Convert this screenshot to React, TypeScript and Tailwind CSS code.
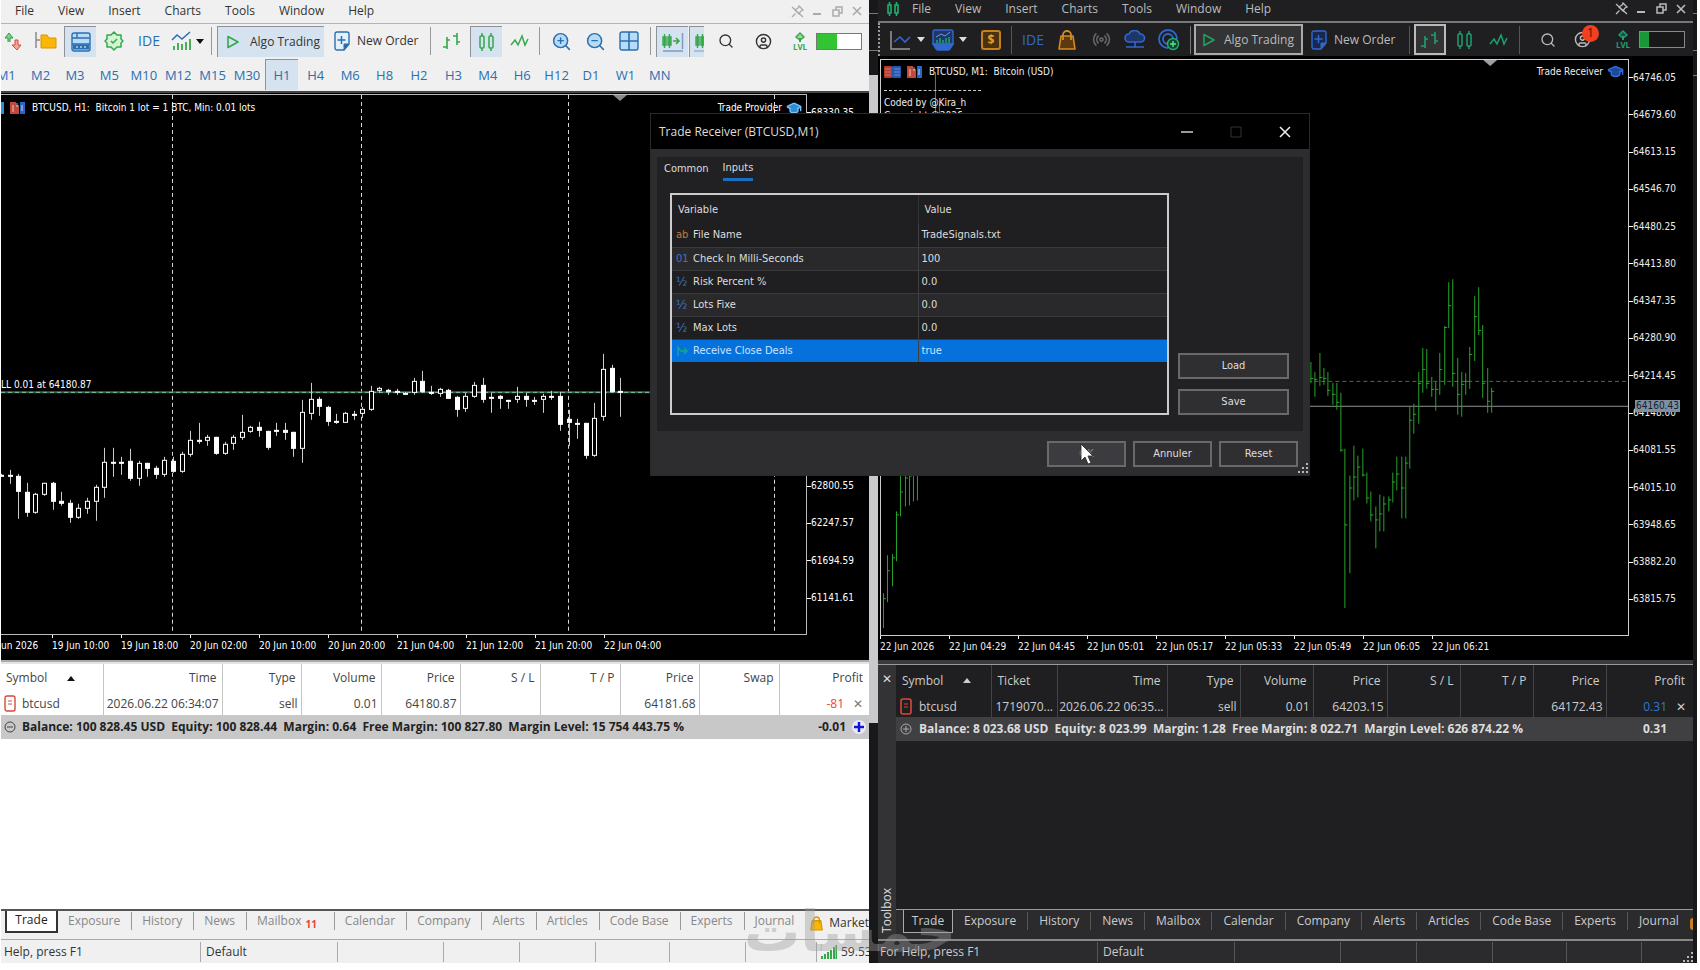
import type { ReactNode } from 'react';
import { CircleUser, GraduationCap, Radio, Search, ZoomIn, ZoomOut } from 'lucide-react';

// high, low, body top, body bottom, hollow (1) or filled (0), in thirds of a pixel
const CANDLES: number[][] = [
  [403, 411, 405, 410, 0], [390, 432, 404, 412, 0], [402, 536, 409, 457, 0], [428, 530, 456, 520, 0],
  [460, 522, 462, 520, 1], [430, 468, 430, 465, 1], [425, 510, 430, 486, 0], [456, 498, 484, 492, 0],
  [480, 548, 489, 535, 0], [492, 537, 505, 535, 1], [473, 522, 483, 507, 1], [434, 542, 440, 486, 1],
  [325, 475, 367, 443, 1], [325, 410, 365, 371, 0], [350, 404, 365, 371, 0], [328, 422, 364, 416, 0],
  [362, 437, 370, 416, 1], [368, 411, 369, 387, 0], [378, 418, 385, 405, 0], [350, 412, 360, 406, 1],
  [350, 400, 364, 395, 0], [335, 398, 343, 396, 1], [273, 352, 299, 346, 1], [248, 313, 299, 304, 0],
  [285, 318, 291, 304, 1], [290, 344, 291, 343, 0], [305, 345, 313, 343, 1], [284, 330, 291, 313, 1],
  [224, 300, 275, 294, 1], [257, 280, 260, 276, 1], [247, 290, 260, 274, 0], [273, 330, 274, 325, 0],
  [250, 288, 271, 276, 0], [248, 300, 271, 280, 0], [276, 352, 277, 328, 0], [180, 370, 216, 326, 1],
  [130, 240, 178, 222, 1], [170, 227, 176, 202, 0], [199, 257, 200, 245, 0], [222, 252, 242, 247, 0],
  [215, 250, 220, 248, 1], [214, 240, 223, 228, 0], [200, 235, 207, 221, 1], [138, 212, 152, 209, 1],
  [142, 160, 144, 154, 1], [147, 166, 150, 155, 0], [146, 166, 153, 160, 0], [155, 166, 159, 162, 0],
  [113, 164, 123, 160, 1], [94, 160, 123, 156, 0], [138, 164, 155, 160, 0], [145, 172, 148, 162, 1],
  [147, 178, 149, 176, 0], [168, 230, 172, 210, 0], [160, 215, 167, 208, 1], [127, 173, 136, 170, 1],
  [113, 188, 136, 180, 0], [158, 220, 170, 178, 1], [165, 207, 169, 178, 0], [180, 208, 180, 183, 0],
  [140, 188, 167, 180, 1], [160, 200, 168, 180, 0], [170, 195, 181, 184, 0], [162, 220, 169, 180, 1],
  [152, 180, 168, 172, 0], [155, 272, 168, 256, 0], [209, 318, 238, 250, 0], [238, 297, 249, 253, 0],
  [249, 356, 250, 349, 0], [190, 352, 234, 348, 1], [42, 242, 86, 230, 1], [75, 160, 84, 156, 0],
  [115, 230, 154, 158, 0],
];

// high/low pairs in thirds of a pixel
const BARS_START: number[][] = [
  [1033, 1138], [917, 1060], [915, 1010], [785, 935], [678, 802], [600, 772], [600, 768], [600, 755], [600, 752],
];
const BARS_END: number[][] = [
  [337, 400], [365, 440], [310, 408], [355, 405], [365, 437], [400, 465], [398, 480], [430, 605], [596, 1078],
  [678, 972], [587, 752], [618, 745], [598, 682], [670, 762], [725, 815], [772, 898], [735, 847], [740, 845],
  [740, 785], [670, 760], [622, 723], [622, 807], [620, 807], [468, 657], [463, 553], [367, 523], [295, 430],
  [298, 418], [382, 440], [395, 483], [308, 436], [228, 405], [97, 235], [87, 412], [325, 495], [367, 502],
  [370, 436], [290, 418], [138, 332], [111, 255], [226, 443], [355, 488], [415, 488],
];

const MENU = ['File', 'View', 'Insert', 'Charts', 'Tools', 'Window', 'Help'];
const TIMEFRAMES = [
  'M1', 'M2', 'M3', 'M5', 'M10', 'M12', 'M15', 'M30', 'H1', 'H4',
  'M6', 'H8', 'H2', 'H3', 'M4', 'H6', 'H12', 'D1', 'W1', 'MN',
];
const TABS = [
  'Exposure', 'History', 'News', 'Mailbox', 'Calendar', 'Company', 'Alerts', 'Articles', 'Code Base', 'Experts', 'Journal',
];
const LEFT_TIMES = [
  '19 Jun 10:00', '19 Jun 18:00', '20 Jun 02:00', '20 Jun 10:00', '20 Jun 20:00',
  '21 Jun 04:00', '21 Jun 12:00', '21 Jun 20:00', '22 Jun 04:00',
];
const RIGHT_TIMES = [
  '22 Jun 2026', '22 Jun 04:29', '22 Jun 04:45', '22 Jun 05:01', '22 Jun 05:17',
  '22 Jun 05:33', '22 Jun 05:49', '22 Jun 06:05', '22 Jun 06:21',
];
const LEFT_PRICES = Array.from({ length: 14 }, (_, i) => (68330.35 - i * 552.98).toFixed(2));
const RIGHT_PRICES = Array.from({ length: 15 }, (_, i) => (64746.05 - i * 66.45).toFixed(2));

const INPUTS = [
  { kind: 'ab', name: 'File Name', value: 'TradeSignals.txt' },
  { kind: '01', name: 'Check In Milli-Seconds', value: '100' },
  { kind: '½', name: 'Risk Percent %', value: '0.0' },
  { kind: '½', name: 'Lots Fixe', value: '0.0' },
  { kind: '½', name: 'Max Lots', value: '0.0' },
  { kind: 'flag', name: 'Receive Close Deals', value: 'true' },
];

/* ---------- icons ---------- */

function Svg({ w = 20, h = 20, className = '', children }: { w?: number; h?: number; className?: string; children: ReactNode }) {
  return (
    <svg width={w} height={h} viewBox={`0 0 ${w} ${h}`} fill="none" className={`shrink-0 ${className}`} aria-hidden="true">
      {children}
    </svg>
  );
}

const BarsIcon = ({ c }: { c: string }) => (
  <Svg><path d="M5 6v12M1 16h4M5 9h3M15 2v12M11 5h4M15 11h3" stroke={c} strokeWidth="1.6" /></Svg>
);

const CandlesIcon = ({ c }: { c: string }) => (
  <Svg>
    <rect x="3" y="4" width="4" height="12" rx="1" stroke={c} strokeWidth="1.5" />
    <rect x="12" y="4" width="4" height="12" rx="1" stroke={c} strokeWidth="1.5" />
    <path d="M5 1v3M5 16v3M14 1v3M14 16v3" stroke={c} strokeWidth="1.5" />
  </Svg>
);

const WaveIcon = ({ c }: { c: string }) => (
  <Svg><path d="M1 14l4-5 3 5 4-9 3 9 3-6" stroke={c} strokeWidth="1.5" /></Svg>
);

const PlayIcon = ({ c }: { c: string }) => (
  <Svg w={14} h={16}><path d="M2 2.500l10 5.500-10 5.500z" stroke={c} strokeWidth="1.6" strokeLinejoin="round" /></Svg>
);

const NewOrderIcon = ({ c, fill }: { c: string; fill: string }) => (
  <Svg w={16}>
    <path d="M3 1h10a2 2 0 012 2v10l-5 6H3a2 2 0 01-2-2V3a2 2 0 012-2z" fill={fill} stroke={c} strokeWidth="1.4" />
    <path d="M15 13h-5v6z" fill={c} stroke={c} />
    <path d="M7.500 5v8M3.500 9h8" stroke={c} strokeWidth="1.5" />
  </Svg>
);

const BagIcon = ({ w, h, c, fill }: { w: number; h: number; c: string; fill: string }) => (
  <svg width={w} height={h} viewBox="0 0 18 20" fill="none" className="shrink-0" aria-hidden="true">
    <path d="M3 6h12l2 13H1z" fill={fill} stroke={c} strokeWidth="1.6" strokeLinejoin="round" />
    <path d="M5 10V5a4 4 0 018 0v5" stroke={c} strokeWidth="1.8" />
  </svg>
);

const LevelIcon = ({ c }: { c: string }) => (
  <span className="flex w-4 shrink-0 flex-col items-center">
    <Svg w={12} h={10}><path d="M6 1l4 4-2.500 2h-3L2 5z" fill={c} fillOpacity=".4" stroke={c} strokeWidth="1.4" /><path d="M6 6v4" stroke={c} strokeWidth="2" /></Svg>
    <span className="text-[8px] leading-[9px] font-bold" style={{ color: c }}>LVL</span>
  </span>
);

const Caret = ({ c }: { c: string }) => (
  <Svg w={8} h={5}><path d="M0 0h8L4 5z" fill={c} /></Svg>
);

const ChartPair = () => (
  <Svg w={16} h={14}>
    <path d="M0 1h6v3h3v9H0z" fill="#c0483c" />
    <path d="M10 1h5v12h-5z" fill="#2a66c8" />
    <path d="M3 4v7M7 2v4M12 4v6" stroke="#fff" strokeOpacity=".7" />
  </Svg>
);

const Depth = () => (
  <Svg w={17} h={14}>
    <rect y="1" width="8" height="12" rx="1" fill="#b5382f" />
    <rect x="8" y="1" width="9" height="12" rx="1" fill="#2458b0" />
    <path d="M1 4h6M1 7h6M1 10h6M10 4h6M10 7h6M10 10h6" stroke="#fff" strokeOpacity=".35" />
  </Svg>
);

const Grip = () => (
  <Svg w={10} h={10} className="text-[#b8b8b8]">
    <path d="M8 0h2v2H8zM8 4h2v2H8zM4 4h2v2H4zM8 8h2v2H8zM4 8h2v2H4zM0 8h2v2H0z" fill="currentColor" />
  </Svg>
);

const WindowControls = ({ color }: { color: string }) => (
  <div className={`flex items-center gap-1 ${color}`}>
    <button aria-label="Unpin" className="flex w-4 justify-center">
      <Svg w={13} h={13}>
        <path d="M8 1l4 4-2 1-2 3-4-4 3-2zM4.500 8.500L1 12M1 2l11 10" stroke="currentColor" strokeWidth="1.3" />
      </Svg>
    </button>
    <button aria-label="Minimize" className="flex w-4 justify-center"><Svg w={10} h={10}><path d="M1 8h8" stroke="currentColor" strokeWidth="2" /></Svg></button>
    <button aria-label="Restore" className="flex w-4 justify-center">
      <Svg w={11} h={11}><path d="M1 4h6v6H1zM4 4V1h6v6H7" stroke="currentColor" strokeWidth="1.5" /></Svg>
    </button>
    <button aria-label="Close" className="flex w-4 justify-center">
      <Svg w={10} h={10}><path d="M1 1l8 8M9 1L1 9" stroke="currentColor" strokeWidth="1.6" /></Svg>
    </button>
  </div>
);

const Slot = ({ label, children }: { label: string; children: ReactNode }) => (
  <button aria-label={label} className="flex h-[31px] w-[34px] shrink-0 items-center justify-center">{children}</button>
);

const LightToggle = ({ label, children }: { label: string; children: ReactNode }) => (
  <button aria-label={label} className="mx-px flex h-[31px] w-8 shrink-0 items-center justify-center border-t border-l border-[#8f9296] bg-[#d5e2f0]">
    {children}
  </button>
);

/* ---------- charts ---------- */

function PriceAxis({ prices }: { prices: string[] }) {
  return (
    <ul className="flex w-[62px] shrink-0 flex-col pb-[18px]">
      {prices.map((p) => (
        <li key={p} className="flex min-h-0 flex-1 items-center">
          <span className="h-px w-1 bg-white" />
          {p}
        </li>
      ))}
    </ul>
  );
}

function TimeAxis({ times }: { times: string[] }) {
  return (
    <>
      {times.map((t) => (
        <li key={t} className="w-[69px] shrink-0">
          <span className="block h-[3px] w-px bg-white" />
          <span className="block leading-4 whitespace-nowrap">{t}</span>
        </li>
      ))}
    </>
  );
}

function CandleChart() {
  return (
    <svg viewBox="0 0 805 539" preserveAspectRatio="none" className="absolute inset-0 h-full w-full" aria-hidden="true">
      {[171, 360, 567, 773].map((x) => (
        <path key={x} d={`M${x}.500 0V539`} stroke="#d8d8d8" strokeDasharray="4 3" />
      ))}
      <path d="M0 297.500H805" stroke="#2c6b4c" strokeWidth="2" />
      <path d="M0 297.500H805" stroke="#8fb8a0" strokeDasharray="4 3" />
      {CANDLES.map(([high, low, top, bottom, hollow], i) => {
        const x = Math.round(i * 8.6);
        const y = (v: number) => Math.round(245 + v / 3);
        return (
          <g key={i} stroke="#fff">
            <path d={`M${x}.500 ${y(high)}V${y(low)}`} stroke="#ccc" />
            <rect
              x={x - 1.5}
              y={y(top) + 0.5}
              width="4"
              height={Math.max(1, y(bottom) - y(top) - 1)}
              fill={hollow ? '#000' : '#fff'}
            />
          </g>
        );
      })}
      <path d="M612 0h14l-7 6z" fill="#8a8a8a" />
    </svg>
  );
}

function BarSeries({ bars, start }: { bars: number[][]; start: number }) {
  const y = (v: number) => Math.round(191 + v / 3);
  return (
    <>
      {bars.map(([high, low], i) => {
        const x = Math.round(start + i * 4.31);
        const next = bars[i + 1];
        const link = next ? y((Math.max(high, next[0]) + Math.min(low, next[1])) / 2) : y(high + 8);
        return <path key={i} d={`M${x}.500 ${y(high)}V${y(low)}M${x} ${link}.500h3`} />;
      })}
    </>
  );
}

function BarChart() {
  return (
    <svg viewBox="0 0 748 577" preserveAspectRatio="none" className="absolute inset-0 h-full w-full" aria-hidden="true">
      <path d="M0 322.500H748" stroke="#1f8a2c" strokeDasharray="4 3" />
      <path d="M0 347.500H748" stroke="#8c8f93" />
      <g stroke="#27a52b">
        <path d="M54.500 12V70M58.500 44V70" />
        <BarSeries bars={BARS_START} start={2} />
        <BarSeries bars={BARS_END} start={430} />
      </g>
      <path d="M603 0h14l-7 6z" fill="#9aa0a6" />
    </svg>
  );
}

/* ---------- left terminal ---------- */

function LeftToolbar() {
  return (
    <div className="flex h-[35px] shrink-0 items-center overflow-hidden border-t border-[#b4b4b4] text-[#333]">
      <div className="-ml-[6px] flex shrink-0 items-center">
        <Slot label="Symbols">
          <Svg>
            <path d="M6 11V7H3l4-5 4 5H8v4" fill="#7fd08a" stroke="#2f9e44" />
            <path d="M13 9v5h-3l5 5 4-5h-3V9z" fill="#f3a59c" stroke="#d9483b" />
          </Svg>
        </Slot>
        <Slot label="Navigator">
          <Svg w={22}><path d="M1 1v16M1 9h4" stroke="#8a8a8a" strokeWidth="1.5" /><path d="M6 4h6l2 3h7v10H6z" fill="#fbb606" stroke="#d99400" /></Svg>
        </Slot>
        <LightToggle label="Toolbox">
          <Svg>
            <rect x="1" y="1" width="18" height="18" rx="2" fill="#b8dcf8" stroke="#2a6fb0" strokeWidth="1.4" />
            <path d="M1 6h18M6 1v5M1 12h18" stroke="#2a6fb0" strokeWidth="1.4" />
            <path d="M2 12.500h16v5H2z" fill="#2a6fb0" /><path d="M5 15h10" stroke="#fff" strokeDasharray="2 2" />
          </Svg>
        </LightToggle>
        <Slot label="Options">
          <Svg>
            <path d="M10 1l3 3h4v4l2 2-2 2v4h-4l-3 3-3-3H3v-4l-2-2 2-2V4h4z" fill="#d3f5d6" stroke="#35a84a" strokeWidth="1.5" strokeLinejoin="round" />
            <path d="M7 10l2 2 4-4" stroke="#35a84a" strokeWidth="1.5" />
          </Svg>
        </Slot>
        <button className="w-[36px] text-[14px] text-[#2a6fb0]">IDE</button>
        <button aria-label="Indicators" className="flex w-10 items-center gap-1 pl-1">
          <Svg w={21}>
            <path d="M1 9l5-5 5 4 8-7" stroke="#2a6fb0" strokeWidth="1.5" />
            <path d="M3 19v-4M7 19v-7M11 19v-6M15 19v-8M19 19V8" stroke="#35a84a" strokeWidth="1.8" />
          </Svg>
          <Caret c="#111" />
        </button>
      </div>
      <div className="ml-1 h-7 w-px shrink-0 bg-[#999]" />
      <button className="ml-[5px] flex h-[31px] w-[107px] shrink-0 items-center gap-[10px] border-t border-l border-[#8f9296] bg-[#d5e2f0] pl-2 whitespace-nowrap">
        <PlayIcon c="#35a84a" />Algo Trading
      </button>
      <button className="ml-[10px] flex shrink-0 items-center gap-[7px] whitespace-nowrap">
        <NewOrderIcon c="#2a6fb0" fill="#e4f1fc" />New Order
      </button>
      <div className="ml-auto flex shrink-0 items-center pr-[7px]">
        <div className="h-7 w-px bg-[#999]" />
        <div className="ml-1 flex items-center">
          <Slot label="Bar chart"><BarsIcon c="#35a84a" /></Slot>
          <LightToggle label="Candlesticks"><CandlesIcon c="#35a84a" /></LightToggle>
          <Slot label="Line chart"><WaveIcon c="#35a84a" /></Slot>
        </div>
        <div className="mr-1 ml-[2px] h-7 w-px bg-[#999]" />
        <Slot label="Zoom in"><ZoomIn size={21} strokeWidth={1.7} className="fill-[#b8dcf8] text-[#2a6fb0]" /></Slot>
        <Slot label="Zoom out"><ZoomOut size={21} strokeWidth={1.7} className="fill-[#b8dcf8] text-[#2a6fb0]" /></Slot>
        <Slot label="Tile windows">
          <Svg><rect x="1" y="1" width="18" height="18" rx="2" fill="#b8dcf8" stroke="#2a6fb0" strokeWidth="1.4" /><path d="M10 1v18M1 10h18" stroke="#2a6fb0" strokeWidth="1.6" /></Svg>
        </Slot>
        <div className="mx-1 h-7 w-px bg-[#999]" />
        <LightToggle label="Chart shift">
          <Svg w={24}>
            <path d="M2 5h3v8H2zM7 5h3v8H7zM3.500 2v14M8.500 2v14" stroke="#35a84a" strokeWidth="1.4" />
            <path d="M12 9h6M15 6l3 3-3 3" stroke="#35a84a" strokeWidth="1.6" /><path d="M21.500 1v16M2 19h20" stroke="#7c9cc0" strokeWidth="1.5" />
          </Svg>
        </LightToggle>
        <button aria-label="Auto scroll" className="flex h-[31px] w-[15px] items-center overflow-hidden border-t border-l border-[#8f9296] bg-[#d5e2f0] pl-1">
          <Svg w={12}><path d="M2 5h3v8H2zM7 5h3v8H7zM3.500 2v14M8.500 2v14" stroke="#35a84a" strokeWidth="1.4" /><path d="M0 19h12" stroke="#7c9cc0" /></Svg>
        </button>
        <button aria-label="Search" className="ml-[14px] w-[37px]"><Search size={16} strokeWidth={2} /></button>
        <button aria-label="Account" className="w-[37px]"><CircleUser size={17} strokeWidth={2} /></button>
        <LevelIcon c="#35a84a" />
        <div className="ml-2 h-[17px] w-[46px] border border-[#777] bg-white"><div className="h-full w-5 bg-[#33c433]" /></div>
      </div>
    </div>
  );
}

function LeftTerminal() {
  return (
    <section className="flex min-w-0 flex-[868] flex-col overflow-hidden bg-[#f0f0f0]">
      <nav className="flex h-[23px] shrink-0 items-center justify-between pr-1 pb-px pl-[14px] text-[#333]">
        <div className="flex gap-6">
          {MENU.map((m) => <button key={m}>{m}</button>)}
        </div>
        <WindowControls color="text-[#aaa]" />
      </nav>
      <LeftToolbar />
      <div className="-ml-3 grid h-[33px] w-[688px] shrink-0 grid-cols-20 items-start pt-px text-[13px] text-[#2a6fb0]">
        {TIMEFRAMES.map((tf) => (
          <button
            key={tf}
            className={tf === 'H1' ? 'mx-px h-[31px] border-t border-l border-[#8f9296] bg-[#d5e2f0]' : 'h-[31px]'}
          >
            {tf}
          </button>
        ))}
      </div>

      <div className="flex min-h-0 flex-[569] flex-col border-t-2 border-[#444] bg-black pt-px font-['DejaVu_Sans_Condensed','DejaVu_Sans',sans-serif] text-[10px] text-white">
        <div className="flex min-h-0 flex-1">
          <div className="relative min-w-0 flex-1 border-t border-r border-b border-[#bbb]">
            <CandleChart />
            <div className="relative flex items-center justify-between pt-[5px] pr-1">
              <div className="flex items-center gap-[6px]">
                <span className="h-3 w-[3px] bg-[#2a8fd8]" />
                <ChartPair />
                <span className="whitespace-pre">BTCUSD, H1:  Bitcoin 1 lot = 1 BTC, Min: 0.01 lots</span>
              </div>
              <div className="flex items-center gap-1">Trade Provider<GraduationCap size={16} className="fill-[#2a8fd8] text-[#7cc4f4]" /></div>
            </div>
            <span className="absolute bottom-[45%] left-0 leading-3">LL 0.01 at 64180.87</span>
          </div>
          <PriceAxis prices={LEFT_PRICES} />
        </div>
        <ul className="flex h-[25px] shrink-0 overflow-hidden">
          <li className="w-[51px] shrink-0 pt-[3px] leading-4">un 2026</li>
          <TimeAxis times={LEFT_TIMES} />
        </ul>
      </div>

      <div className="flex min-h-0 flex-[303] flex-col border-t-2 border-[#aaa]">
        <div className="flex min-h-0 flex-1 flex-col border-t-2 border-[#e4e4e4] bg-white text-[#444]">
          <table className="w-full table-fixed">
            <colgroup>
              <col className="w-[102px]" /><col className="w-[119px]" /><col className="w-[79px]" /><col className="w-[80px]" />
              <col className="w-[79px]" /><col className="w-[80px]" /><col className="w-[80px]" /><col className="w-[79px]" />
              <col className="w-[80px]" /><col />
            </colgroup>
            <thead>
              <tr className="h-[29px]">
                <th className="border-r border-[#c4c4c4] pl-[5px] text-left font-normal">
                  <span className="flex items-center gap-5">Symbol<Svg w={8} h={5}><path d="M0 5h8L4 0z" fill="#111" /></Svg></span>
                </th>
                {['Time', 'Type', 'Volume', 'Price', 'S / L', 'T / P', 'Price', 'Swap'].map((h, i) => (
                  <th key={i} className="border-r border-[#c4c4c4] pr-[5px] text-right font-normal">{h}</th>
                ))}
                <th className="pr-[6px] text-right font-normal">Profit</th>
              </tr>
            </thead>
            <tbody>
              <tr className="h-[22px]">
                <td className="border-r border-[#c4c4c4] pl-[3px]">
                  <span className="flex items-center gap-[6px]">
                    <Svg w={12} h={17}><rect x="1" y="1" width="10" height="15" rx="2" stroke="#d9483b" strokeWidth="1.4" /><path d="M4 6h4M4 9h4" stroke="#d9483b" /></Svg>
                    btcusd
                  </span>
                </td>
                {['2026.06.22 06:34:07', 'sell', '0.01', '64180.87', '', '', '64181.68', ''].map((v, i) => (
                  <td key={i} className="border-r border-[#c4c4c4] pr-[3px] text-right whitespace-nowrap">{v}</td>
                ))}
                <td className="pr-[5px]">
                  <span className="flex items-center justify-end gap-2 text-[#e8453c]">
                    -81<button aria-label="Close position" className="w-3 text-[#777]">✕</button>
                  </span>
                </td>
              </tr>
              <tr className="h-6 bg-[#c8c8c8] font-bold text-[#222]">
                <td colSpan={9} className="pl-[3px] whitespace-pre">
                  <span className="flex items-center gap-[6px]">
                    <Svg w={12} h={12}><circle cx="6" cy="6" r="5" stroke="#444" /><path d="M3 6h6" stroke="#444" /></Svg>
                    Balance: 100 828.45 USD  Equity: 100 828.44  Margin: 0.64  Free Margin: 100 827.80  Margin Level: 15 754 443.75 %
                  </span>
                </td>
                <td className="pr-[3px]">
                  <span className="flex items-center justify-end gap-[6px]">
                    -0.01
                    <Svg w={14} h={14}><circle cx="7" cy="7" r="7" fill="#e8e8f8" /><path d="M7 2v10M2 7h10" stroke="#1414d8" strokeWidth="2.4" /></Svg>
                  </span>
                </td>
              </tr>
            </tbody>
          </table>
        </div>
        <div className="flex h-[30px] shrink-0 items-start overflow-hidden border-t-2 border-[#555] whitespace-nowrap text-[#888]">
          <button className="-mt-[2px] ml-1 h-6 w-[53px] shrink-0 border-2 border-t-0 border-[#333] bg-white text-[#222]">Trade</button>
          {TABS.map((t) => (
            <button
              key={t}
              className={`mt-px h-[18px] shrink-0 pr-[11px] pl-[10px] leading-4 ${t === 'Journal' ? '' : 'border-r border-[#999]'}`}
            >
              {t}
              {t === 'Mailbox' && <sub className="mr-[6px] pl-1 text-[10px] font-bold text-[#e8453c]">11</sub>}
            </button>
          ))}
          <button className="mt-[2px] flex shrink-0 items-center gap-[6px] pl-[5px] leading-5 text-[#333]">
            <BagIcon w={13} h={15} c="#d99400" fill="#fbb606" />Market
          </button>
        </div>
        <footer className="flex h-6 shrink-0 items-center overflow-hidden border-t border-[#aaa] whitespace-nowrap text-[#333]">
          <span className="w-[199px] shrink-0 pl-[3px]">Help, press F1</span>
          <span className="h-5 w-[137px] shrink-0 border-l border-[#aaa] pl-[5px] leading-5">Default</span>
          <span className="h-5 w-[106px] shrink-0 border-l border-[#aaa]" />
          <span className="h-5 w-[76px] shrink-0 border-l border-[#aaa]" />
          <span className="h-5 w-[76px] shrink-0 border-l border-[#aaa]" />
          <span className="h-5 w-[74px] shrink-0 border-l border-[#aaa]" />
          <span className="h-5 w-[76px] shrink-0 border-l border-[#aaa]" />
          <span className="h-5 w-[71px] shrink-0 border-l border-[#aaa]" />
          <span className="flex h-5 items-center gap-1 border-l border-[#aaa] pl-1">
            <Svg w={16} h={14}><path d="M1 14v-3M4 14V9M7 14V7M10 14V5M13 14V2M15.500 14V0" stroke="#35a84a" strokeWidth="2" /></Svg>
            59.53
          </span>
        </footer>
      </div>
    </section>
  );
}

/* ---------- right terminal ---------- */

function RightToolbar() {
  return (
    <div className="flex h-[35px] shrink-0 items-center overflow-hidden border-t-2 border-[#777] whitespace-nowrap text-[#bbb]">
      <div className="h-full w-[3px] shrink-0 border-l-2 border-dotted border-[#999]" />
      <button aria-label="Chart type" className="ml-[9px] flex w-[42px] items-center gap-[6px]">
        <Svg w={21}><path d="M1 1v18h19" stroke="#999" strokeWidth="1.5" /><path d="M4 12l6-5 5 5 5-5" stroke="#3068d0" strokeWidth="1.6" /></Svg>
        <Caret c="#ddd" />
      </button>
      <button aria-label="Indicators" className="flex w-[42px] items-center gap-[5px]">
        <Svg w={22} h={22}>
          <path d="M1 3a2 2 0 012-2h16a2 2 0 012 2v12H1z" fill="#1c3768" stroke="#3068d0" strokeWidth="1.4" />
          <path d="M1 15h20l-3 5a2 2 0 01-2 1H6a2 2 0 01-2-1z" fill="#3068d0" stroke="#3068d0" strokeWidth="1.4" />
          <path d="M4 8l5-3 4 2 5-4" stroke="#6a9cf0" /><path d="M5 14v-3M8 14v-5M11 14v-3M14 14V9M17 14V8" stroke="#25a070" strokeWidth="1.5" />
        </Svg>
        <Caret c="#ddd" />
      </button>
      <Slot label="Depth of market">
        <span className="h-5 w-5 rounded-[3px] border-2 border-[#c87f1e] bg-[#4a3210] leading-4 font-bold text-[#f09a28]">$</span>
      </Slot>
      <div className="mr-1 ml-[3px] h-7 w-px shrink-0 bg-[#555]" />
      <button className="w-[34px] text-[14px] text-[#3068d0]">IDE</button>
      <Slot label="Market"><BagIcon w={18} h={20} c="#d98a1e" fill="#5c3a10" /></Slot>
      <Slot label="Signals"><Radio size={19} className="text-[#666]" /></Slot>
      <Slot label="VPS">
        <Svg w={22}><path d="M5 12a4 4 0 010-8 6 6 0 0111 0 4 4 0 011 8z" fill="#1c3768" stroke="#3068d0" strokeWidth="1.6" /><path d="M11 12v5M2 17h18" stroke="#3068d0" strokeWidth="1.6" /></Svg>
      </Slot>
      <Slot label="Copy trading">
        <Svg w={22} h={22}>
          <path d="M10 19a9 9 0 119-9M10 15a5 5 0 115-5" stroke="#3068d0" strokeWidth="1.8" />
          <circle cx="15" cy="15" r="5.500" fill="#0c4a2c" stroke="#25b070" strokeWidth="1.4" /><path d="M15 12v6M12 15h6" stroke="#5fe0a0" strokeWidth="1.4" />
        </Svg>
      </Slot>
      <div className="ml-1 h-7 w-px shrink-0 bg-[#777]" />
      <button className="ml-[3px] flex h-[31px] w-[109px] shrink-0 items-center gap-2 border-2 border-[#aaa] bg-[#333] pl-[6px]">
        <PlayIcon c="#1fa060" />Algo Trading
      </button>
      <button className="ml-2 flex shrink-0 items-center gap-[7px]">
        <NewOrderIcon c="#3068d0" fill="#16284c" />New Order
      </button>
      <div className="ml-auto flex shrink-0 items-center pr-2">
        <div className="h-7 w-px bg-[#555]" />
        <button aria-label="Bar chart" className="mr-[2px] ml-1 flex h-[31px] w-8 items-center justify-center border-2 border-[#bbb] bg-[#333]"><BarsIcon c="#1fa070" /></button>
        <Slot label="Candlesticks"><CandlesIcon c="#1fa070" /></Slot>
        <Slot label="Line chart"><WaveIcon c="#1fa070" /></Slot>
        <div className="mr-[20px] ml-[3px] h-7 w-px bg-[#555]" />
        <button aria-label="Search" className="w-[34px]"><Search size={16} strokeWidth={2} /></button>
        <button aria-label="Account" className="relative w-[41px]">
          <CircleUser size={17} strokeWidth={2} />
          <span className="absolute -top-[6px] left-2 h-[17px] w-[17px] rounded-full bg-[#f04020] text-[12px] leading-4 text-[#4a1408]">1</span>
        </button>
        <LevelIcon c="#1fa070" />
        <div className="ml-2 h-[17px] w-[46px] border border-[#888] bg-[#181818]"><div className="h-full w-[9px] bg-[#1a9838]" /></div>
      </div>
    </div>
  );
}

function RightTerminal() {
  return (
    <section className="flex min-w-0 flex-[815] flex-col overflow-hidden bg-[#1f1f21]">
      <nav className="flex h-[21px] shrink-0 items-center justify-between pr-1 pb-1 pl-2 text-[#bbb]">
        <div className="flex items-center">
          <Svg w={14} h={16} className="mr-3"><path d="M2 4h3v8H2zM9 4h3v8H9zM3.500 1v3M3.500 12v3M10.500 1v3M10.500 12v3" stroke="#1fb070" strokeWidth="1.6" /></Svg>
          <div className="flex gap-6">
            {MENU.map((m) => <button key={m}>{m}</button>)}
          </div>
        </div>
        <WindowControls color="text-[#bbb]" />
      </nav>
      <RightToolbar />

      <div className="flex min-h-0 flex-[605] flex-col bg-black pt-[3px] pl-[2px] font-['DejaVu_Sans_Condensed','DejaVu_Sans',sans-serif] text-[10px] text-[#eee]">
        <div className="flex min-h-0 flex-1">
          <div className="relative min-w-0 flex-1 border border-[#ccc]">
            <BarChart />
            <div className="relative flex items-center justify-between pt-[3px] pr-1 pl-[3px]">
              <div className="flex items-center gap-[6px]">
                <Depth />
                <ChartPair />
                <span className="whitespace-pre">BTCUSD, M1:  Bitcoin (USD)</span>
              </div>
              <div className="flex items-center gap-1">Trade Receiver<GraduationCap size={17} className="fill-[#1c4a9c] text-[#2e6fe0]" /></div>
            </div>
            <div className="relative pl-[3px] leading-[13px]">
              <div className="mt-[10px] mb-[5px] w-[97px] border-t border-dashed border-[#ccc]" />
              <p>Coded by @Kira_h</p>
              <p>Copyright @2026</p>
            </div>
          </div>
          <div className="relative flex pr-[2px]">
            <PriceAxis prices={RIGHT_PRICES} />
            <span className="absolute top-[59%] left-[6px] mt-px bg-[#7f8fa0] px-px leading-3 text-[#14202c]">64160.43</span>
          </div>
        </div>
        <ul className="flex h-6 shrink-0 overflow-hidden">
          <TimeAxis times={RIGHT_TIMES} />
        </ul>
      </div>

      <div className="flex min-h-0 flex-[301] flex-col border-t-4 border-[#3a3a3c]">
        <div className="flex min-h-0 flex-1 border-t border-[#999]">
          <div className="flex w-[18px] shrink-0 flex-col items-center justify-between bg-[#333336] pt-[6px] pb-[6px] text-[#ddd]">
            <button aria-label="Close toolbox">✕</button>
            <span className="rotate-180 text-[12px] leading-[18px] [writing-mode:vertical-rl]">Toolbox</span>
          </div>
          <div className="flex min-w-0 flex-1 flex-col text-[#ccc]">
            <table className="w-full table-fixed">
              <colgroup>
                <col className="w-[95px]" /><col className="w-[66px]" /><col className="w-[110px]" /><col className="w-[73px]" />
                <col className="w-[73px]" /><col className="w-[74px]" /><col className="w-[73px]" /><col className="w-[73px]" />
                <col className="w-[73px]" /><col />
              </colgroup>
              <thead>
                <tr className="h-[31px]">
                  <th className="border-r border-[#444] pl-[6px] text-left font-normal">
                    <span className="flex items-center gap-5">Symbol<Svg w={8} h={5}><path d="M0 5h8L4 0z" fill="#ccc" /></Svg></span>
                  </th>
                  <th className="border-r border-[#444] pl-[6px] text-left font-normal">Ticket</th>
                  {['Time', 'Type', 'Volume', 'Price', 'S / L', 'T / P', 'Price'].map((h, i) => (
                    <th key={i} className="border-r border-[#444] pr-[6px] text-right font-normal">{h}</th>
                  ))}
                  <th className="pr-[8px] text-right font-normal">Profit</th>
                </tr>
              </thead>
              <tbody>
                <tr className="h-[21px]">
                  <td className="border-r border-[#444] pl-1">
                    <span className="flex items-center gap-[7px]">
                      <Svg w={12} h={17}><rect x="1" y="1" width="10" height="15" rx="2" stroke="#d9483b" strokeWidth="1.6" /><path d="M4 6h4M4 9h4" stroke="#d9483b" /></Svg>
                      btcusd
                    </span>
                  </td>
                  <td className="border-r border-[#444] pl-1">1719070...</td>
                  {['2026.06.22 06:35...', 'sell', '0.01', '64203.15', '', '', '64172.43'].map((v, i) => (
                    <td key={i} className="border-r border-[#444] pr-[3px] text-right whitespace-nowrap">{v}</td>
                  ))}
                  <td className="pr-[6px]">
                    <span className="flex items-center justify-end gap-2 text-[#2f78c8]">
                      0.31<button aria-label="Close position" className="w-3 text-[#ccc]">✕</button>
                    </span>
                  </td>
                </tr>
                <tr className="h-6 bg-[#404042] font-bold text-[#ddd]">
                  <td colSpan={9} className="pl-1 whitespace-pre">
                    <span className="flex items-center gap-[7px]">
                      <Svg w={12} h={12}><circle cx="6" cy="6" r="5" stroke="#aaa" /><path d="M3 6h6M6 3v6" stroke="#aaa" /></Svg>
                      Balance: 8 023.68 USD  Equity: 8 023.99  Margin: 1.28  Free Margin: 8 022.71  Margin Level: 626 874.22 %
                    </span>
                  </td>
                  <td className="pr-[26px] text-right">0.31</td>
                </tr>
              </tbody>
            </table>
            <div className="mt-auto flex h-[30px] shrink-0 items-start overflow-hidden border-t border-[#999] bg-[#2b2b2d] whitespace-nowrap">
              <button className="-mt-px ml-[7px] h-6 w-[50px] shrink-0 border border-t-0 border-[#aaa] bg-[#1f1f21]">Trade</button>
              {TABS.map((t) => (
                <button
                  key={t}
                  className={`mt-[2px] h-[18px] shrink-0 px-[11px] leading-4 ${t === 'Journal' ? '' : 'border-r border-[#555]'}`}
                >
                  {t}
                </button>
              ))}
              <span className="mt-2 ml-auto h-3 w-[3px] shrink-0 rounded-l bg-[#c87f1e]" />
            </div>
          </div>
        </div>
        <footer className="flex h-6 shrink-0 items-center overflow-hidden border-t-2 border-[#888] bg-[#2b2b2d] whitespace-nowrap text-[#ccc]">
          <span className="w-[219px] shrink-0 pl-[2px]">For Help, press F1</span>
          <span className="h-5 w-[137px] shrink-0 border-l border-[#555] pl-[5px] leading-5">Default</span>
          <span className="h-5 w-[106px] shrink-0 border-l border-[#555]" />
          <span className="h-5 w-[76px] shrink-0 border-l border-[#555]" />
          <span className="h-5 w-[76px] shrink-0 border-l border-[#555]" />
          <span className="h-5 w-[74px] shrink-0 border-l border-[#555]" />
          <span className="h-5 w-[75px] shrink-0 border-l border-[#555]" />
          <span className="flex h-5 flex-1 items-end justify-end border-l border-[#555]"><Grip /></span>
        </footer>
      </div>
    </section>
  );
}

/* ---------- dialog ---------- */

function InputIcon({ kind }: { kind: string }) {
  if (kind === 'flag') {
    return <Svg w={13} h={14}><path d="M2 2v10M2 4l3 3h6M8 4l3 3-3 3" stroke="#14a890" strokeWidth="1.4" /></Svg>;
  }
  if (kind === '½') {
    return <span className="w-[13px] text-[13px] leading-4 text-[#3a72c8]">½</span>;
  }
  return <span className={kind === 'ab' ? 'w-[13px] text-[#c47a38]' : 'w-[13px] text-[#3a72c8]'}>{kind}</span>;
}

function ReceiverDialog() {
  const button = 'h-[26px] border-2 border-[#69696c] bg-[#2f2f32]';
  return (
    <div
      role="dialog"
      aria-label="Trade Receiver"
      className="absolute top-[113px] left-[650px] flex h-[363px] w-[660px] flex-col border border-[#2a2a2a] bg-[#2d2d30] font-['DejaVu_Sans_Condensed','DejaVu_Sans',sans-serif] text-[11px] text-[#ddd]"
    >
      <header className="flex h-[35px] shrink-0 items-center bg-black pl-2">
        <h1 className="flex-1 font-['Open_Sans',sans-serif] text-[12px]">Trade Receiver (BTCUSD,M1)</h1>
        <button aria-label="Minimize" className="flex w-[49px] justify-center"><Svg w={12} h={12}><path d="M0 6h12" stroke="#ddd" strokeWidth="1.4" /></Svg></button>
        <button aria-label="Maximize" className="flex w-[49px] justify-center"><Svg w={12} h={12}><path d="M1 1h10v10H1z" stroke="#333" /></Svg></button>
        <button aria-label="Close" className="flex w-[49px] justify-center"><Svg w={12} h={12}><path d="M1 1l10 10M11 1L1 11" stroke="#eee" strokeWidth="1.5" /></Svg></button>
      </header>
      <div className="mx-[6px] mt-2 flex min-h-0 flex-1 flex-col bg-[#212123]">
        <div className="flex gap-[14px] pl-[7px]">
          <button className="h-6">Common</button>
          <button className="h-6 border-b-[3px] border-[#1a6fc0]">Inputs</button>
        </div>
        <div className="mt-3 flex min-h-0 flex-1 pr-[14px] pb-4 pl-[13px]">
          <div className="flex-1 border-2 border-[#ccc] bg-[#1f1f21]">
            <table className="w-full table-fixed text-left">
              <colgroup><col className="w-[246px]" /><col /></colgroup>
              <thead>
                <tr className="h-[29px]">
                  <th className="border-r border-[#333] pl-[6px] font-normal">Variable</th>
                  <th className="pl-[6px] font-normal">Value</th>
                </tr>
              </thead>
              <tbody>
                {INPUTS.map((row) => (
                  <tr
                    key={row.name}
                    className={
                      row.kind === 'flag'
                        ? 'h-[23px] bg-[#0471dc] text-[#cfe6ff]'
                        : 'h-[23px] border-b border-[#3a3a3c] even:bg-[#29292b]'
                    }
                  >
                    <td className="border-r border-[#404044] pl-1">
                      <span className="flex items-center gap-1"><InputIcon kind={row.kind} />{row.name}</span>
                    </td>
                    <td className="pl-[3px]">{row.value}</td>
                  </tr>
                ))}
              </tbody>
            </table>
          </div>
          <div className="ml-[9px] flex w-[111px] flex-col justify-end gap-[10px]">
            <button className={button}>Load</button>
            <button className={button}>Save</button>
          </div>
        </div>
      </div>
      <div className="relative flex h-[44px] shrink-0 justify-end gap-[7px] pt-[10px] pr-[11px]">
        <button className="h-[26px] w-[79px] border-2 border-[#69696c] bg-[#3c3c40] text-[#888]">OK</button>
        <button className={`w-[79px] ${button}`}>Annuler</button>
        <button className={`w-[79px] ${button}`}>Reset</button>
        <span className="absolute right-px bottom-[2px]"><Grip /></span>
        <span className="absolute top-3 right-[215px]">
          <Svg w={14} h={22}><path d="M1 1v17l4-4 3 7 3-1-3-7h5z" fill="#fff" stroke="#222" strokeWidth=".8" /></Svg>
        </span>
      </div>
    </div>
  );
}

export default function App() {
  return (
    <main className="relative flex h-screen overflow-hidden bg-white pr-[3px] pb-[7px] pl-px font-['Open_Sans',sans-serif] text-[12px] leading-4">
      <LeftTerminal />
      <div className="flex w-[9px] shrink-0 flex-col bg-[#18181a]">
        <div className="h-[14px] border-b border-[#777]" />
        <div className="h-[37px] border-b border-[#777]" />
        <div className="mt-6 h-[648px] bg-[#c9c9cb]" />
      </div>
      <RightTerminal />
      <div className="flex w-1 shrink-0 flex-col bg-[#18181a]">
        <div className="h-[14px] border-b border-[#777]" />
        <div className="h-[37px] border-b border-[#777]" />
        <div className="h-[25px] border-b border-[#777]" />
      </div>
      <ReceiverDialog />
      <div className="pointer-events-none absolute inset-x-0 bottom-0 text-center font-['DejaVu_Sans',sans-serif] text-[56px] leading-[76px] font-bold text-[#9a9a9a]/40">
        خمسات
      </div>
    </main>
  );
}
